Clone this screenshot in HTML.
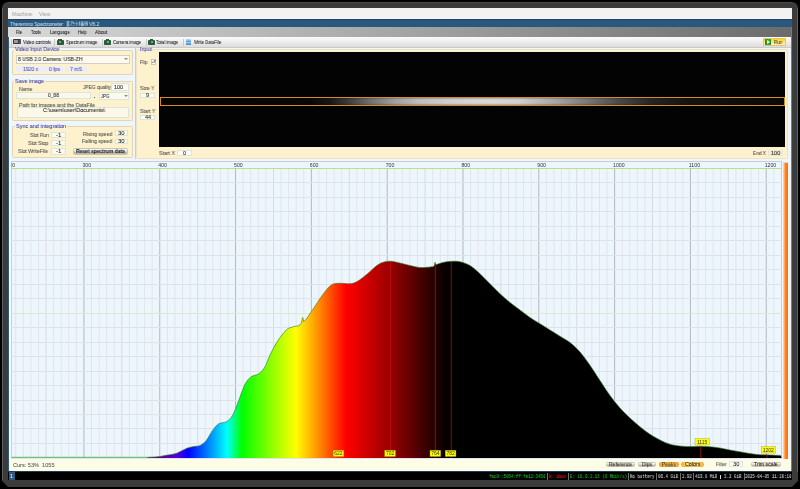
<!DOCTYPE html>
<html><head><meta charset="utf-8">
<style>
*{margin:0;padding:0;box-sizing:border-box}
html,body{width:800px;height:489px;overflow:hidden;background:#000}
body{position:relative;font-family:"Liberation Sans",sans-serif;font-size:5.5px;color:#1a1a1a}
.a{position:absolute}
.t{position:absolute;white-space:nowrap;line-height:1;transform-origin:0 50%;-webkit-text-stroke:0.06px currentColor;will-change:transform}
.m{font-family:"Liberation Mono",monospace}
.frame{left:2px;top:2px;width:796px;height:485px;background:#3b3b3b;border-radius:6px 6px 0 0;
 clip-path:polygon(0 0,100% 0,100% calc(100% - 6px),calc(100% - 6px) 100%,6px 100%,0 calc(100% - 6px))}
.grp{position:absolute;background:#fdf2cd;border:0.8px solid #e2d5b4;border-radius:1.5px}
.fld{position:absolute;background:#fbf6e6;border:0.7px solid #d9e6dc}
.lb{color:#4a4a4a}
.gt{color:#3c3cb0;background:linear-gradient(rgba(253,242,205,0) 38%,#fdf2cd 38%);padding:0 1px}
.btn{position:absolute;border-radius:1.5px;background:linear-gradient(#f7f6f2,#eceae4 45%,#cfcbc0 55%,#b4b0a4);border:0.6px solid #c8c4ba}
.sep{position:absolute;width:0.6px;background:#ababab}
</style></head><body>
<div class="a frame"></div>
<div class="a" style="left:2px;top:8px;width:0.8px;height:472px;background:#5e5e5e"></div>
<div class="a" style="left:797.3px;top:8px;width:0.8px;height:472px;background:#5e5e5e"></div>
<div class="a" style="left:8px;top:2px;width:784px;height:0.8px;background:#4a4a4a"></div>
<!-- content -->
<div class="a" style="left:8px;top:7.8px;width:783.7px;height:463.5px;background:#eef5fb"></div>
<div class="a" style="left:8px;top:19px;width:1px;height:452px;background:#2b5a86"></div>
<div class="a" style="left:9px;top:47px;width:2px;height:412px;background:#f8fbfe"></div>
<!-- Machine / View bar -->
<div class="a" style="left:8px;top:7.8px;width:783.7px;height:11.2px;background:#f3f2f0"></div>
<div class="t" style="left:11.9px;top:13.75px;font-size:5.6px;color:#a9a9a9;transform:translateY(calc(-50% + 0.75px)) scaleX(0.964)">Machine</div>
<div class="t" style="left:39.4px;top:13.75px;font-size:5.6px;color:#a9a9a9;transform:translateY(calc(-50% + 0.75px)) scaleX(0.931)">View</div>
<!-- title bar -->
<div class="a" style="left:8px;top:19px;width:783.7px;height:8px;background:#28587e;border-top:0.7px solid #1d4466"></div>
<div class="t" style="left:9.6px;top:23.7px;font-size:5.6px;color:#cddcea;transform:translateY(calc(-50% + 0.75px)) scaleX(0.858)">Theremino Spectrometer</div>
<svg class="a" style="left:65.8px;top:21.2px" width="22" height="5.4" viewBox="0 0 22 5.4"><g stroke="#d2dfec" stroke-width="0.55" fill="none">
<path d="M0.4,0.6H3.6M0.6,1.8H3.4M0.4,3.0H3.6M2,0.6V5M0.3,4.9H3.7M1,4H3"/>
<path d="M4.7,1H7M5.9,0.3V3M5.2,3L4.8,4.2M7.8,0.8V3.2M7,2H8.6M5,4.9L5.3,4.3M6.2,4.8V4.3M7.2,4.8V4.3M8.2,4.9L8,4.3"/>
<path d="M10.9,0.3V5M9.9,2L9.3,3.5M12,2L12.6,3.5"/>
<path d="M13.6,0.4V5M13,1.6H14.4M14.9,1H17.6M16.2,0.3V5M15.1,2.2H17.4V4.8H15.1ZM15.1,3.5H17.4"/>
<path d="M19,0.4V5M18.3,1.8L19.6,1.2M18.4,3.2L19.6,2.6M20.2,1H21.8M21,0.3V2.4M20.2,2.5H21.8M21,2.5L20.1,5M21,2.5L21.9,5"/>
</g></svg>
<div class="t" style="left:88.75px;top:23.7px;font-size:5.6px;color:#cddcea;transform:translateY(calc(-50% + 0.75px)) scaleX(0.886)">V8.2</div>
<!-- menubar -->
<div class="a" style="left:8px;top:27px;width:783.7px;height:10px;background:linear-gradient(90deg,#d9d9d9,#a3a3a3 52%,#6b6b6b)"></div>
<div class="t" style="left:16px;top:32.25px;color:#222;transform:translateY(calc(-50% + 0.75px)) scaleX(0.687)">File</div>
<div class="t" style="left:31.25px;top:32.25px;color:#222;transform:translateY(calc(-50% + 0.75px)) scaleX(0.779)">Tools</div>
<div class="t" style="left:50px;top:32.25px;color:#222;transform:translateY(calc(-50% + 0.75px)) scaleX(0.807)">Language</div>
<div class="t" style="left:77.9px;top:32.25px;color:#222;transform:translateY(calc(-50% + 0.75px)) scaleX(0.760)">Help</div>
<div class="t" style="left:95px;top:32.25px;color:#222;transform:translateY(calc(-50% + 0.75px)) scaleX(0.852)">About</div>
<!-- toolbar -->
<div class="a" style="left:9px;top:37px;width:782px;height:10px;background:linear-gradient(#fbfbfb,#efefef 45%,#dcdcdc)"></div>
<div class="sep" style="left:11.2px;top:38.5px;height:7px;background:#c8c8c8"></div>
<div class="a" style="left:13.1px;top:39px;width:7.9px;height:5.4px;background:#3a3a3a;border-radius:0.8px"></div>
<div class="a" style="left:14.2px;top:40px;width:4.2px;height:3.4px;background:#9a9a9a"></div>
<div class="a" style="left:18.6px;top:40.2px;width:2.2px;height:3.6px;background:#555"></div>
<div class="t" style="left:23.1px;top:41.9px;transform:translateY(calc(-50% + 0.75px)) scaleX(0.803)">Video controls</div>
<div class="sep" style="left:54.4px;top:38.5px;height:7px;background:#c8c8c8"></div>
<div class="a" style="left:56.5px;top:39.8px;width:7.2px;height:5px;background:#2d5c3b;border-radius:0.8px"></div>
<div class="a" style="left:58.3px;top:39px;width:3.6px;height:1.4px;background:#2d5c3b"></div>
<div class="a" style="left:59.2px;top:41.4px;width:2px;height:2px;background:#8fb89a;border-radius:1px"></div>
<div class="t" style="left:65.6px;top:41.9px;transform:translateY(calc(-50% + 0.75px)) scaleX(0.782)">Spectrum image</div>
<div class="sep" style="left:101.9px;top:38.5px;height:7px;background:#c8c8c8"></div>
<div class="a" style="left:103.8px;top:39.8px;width:7.2px;height:5px;background:#2d5c3b;border-radius:0.8px"></div>
<div class="a" style="left:105.6px;top:39px;width:3.6px;height:1.4px;background:#2d5c3b"></div>
<div class="a" style="left:106.5px;top:41.4px;width:2px;height:2px;background:#8fb89a;border-radius:1px"></div>
<div class="t" style="left:112.5px;top:41.9px;transform:translateY(calc(-50% + 0.75px)) scaleX(0.779)">Camera image</div>
<div class="sep" style="left:145.6px;top:38.5px;height:7px;background:#c8c8c8"></div>
<div class="a" style="left:147.8px;top:39.8px;width:7.2px;height:5px;background:#2d5c3b;border-radius:0.8px"></div>
<div class="a" style="left:149.6px;top:39px;width:3.6px;height:1.4px;background:#2d5c3b"></div>
<div class="a" style="left:150.5px;top:41.4px;width:2px;height:2px;background:#8fb89a;border-radius:1px"></div>
<div class="t" style="left:156.25px;top:41.9px;transform:translateY(calc(-50% + 0.75px)) scaleX(0.789)">Total image</div>
<div class="sep" style="left:183px;top:38.5px;height:7px;background:#c8c8c8"></div>
<div class="a" style="left:185.8px;top:38.6px;width:5.4px;height:3.4px;background:linear-gradient(#bfe2f8,#4a9ad8);border-radius:0.6px"></div>
<div class="a" style="left:185.8px;top:42.2px;width:5.4px;height:3px;background:linear-gradient(#9fd0f0,#3a80c8);border-radius:0.6px"></div>
<div class="t" style="left:194px;top:41.9px;transform:translateY(calc(-50% + 0.75px)) scaleX(0.783)">Write DataFile</div>
<div class="a" style="left:791px;top:27px;width:1px;height:444px;background:#3a8ad8"></div>
<!-- Run button -->
<div class="a" style="left:762.8px;top:37.5px;width:23.7px;height:8.6px;background:linear-gradient(#ffd41a,#ffe45a 45%,#fff2b0 80%,#fff8d8);border:0.7px solid #f0c060;border-radius:0.8px"></div>
<div class="a" style="left:764.9px;top:39px;width:6.3px;height:6.2px;background:linear-gradient(90deg,#13902a,#2fb04a 60%,#178a2c);border-radius:0.5px"></div>
<div class="a" style="left:767.2px;top:39.9px;width:0;height:0;border-left:3.2px solid #f4fff4;border-top:2.2px solid transparent;border-bottom:2.2px solid transparent"></div>
<div class="t" style="left:773.5px;top:42px;color:#333;font-size:5.4px;transform:translateY(calc(-50% + 0.75px)) scaleX(0.829)">Run</div>
<div class="a" style="left:9px;top:47px;width:782px;height:0.8px;background:#c9c9c9"></div>

<!-- left panel groups -->
<div class="grp" style="left:11.5px;top:49.6px;width:121.3px;height:25.7px"></div>
<div class="t gt" style="left:14.25px;top:49.30px;transform:translateY(calc(-50% + 0.75px)) scaleX(0.968)">Video Input Device</div>
<div class="fld" style="left:16px;top:54.9px;width:113.5px;height:8.7px;background:#fdf9ef;border-color:#d3cfc4"></div>
<div class="t" style="left:17.75px;top:59.2px;color:#1a1a1a;transform:translateY(calc(-50% + 0.75px)) scaleX(0.926)">8 USB 2.0 Camera: USB-ZH</div>
<div class="a" style="left:123.6px;top:58.4px;width:0;height:0;border-top:2.2px solid #8a8a8a;border-left:2.3px solid transparent;border-right:2.3px solid transparent"></div>
<div class="fld" style="left:16px;top:66.3px;width:28.6px;height:5.6px;background:#eceef3;border:none"></div>
<div class="t" style="left:22.9px;top:69px;color:#4848b8;transform:translateY(calc(-50% + 0.75px)) scaleX(0.920)">1920 x</div>
<div class="fld" style="left:46px;top:66.3px;width:17.4px;height:5.6px;background:#eceef3;border:none"></div>
<div class="t" style="left:49px;top:69px;color:#4848b8;transform:translateY(calc(-50% + 0.75px)) scaleX(0.921)">0 fps</div>
<div class="fld" style="left:65px;top:66.3px;width:21.6px;height:5.6px;background:#eceef3;border:none"></div>
<div class="t" style="left:70px;top:69px;color:#4848b8;transform:translateY(calc(-50% + 0.75px)) scaleX(0.927)">7 mS</div>

<div class="grp" style="left:11.5px;top:81.25px;width:121.3px;height:40.1px"></div>
<div class="t gt" style="left:14.25px;top:80.95px;transform:translateY(calc(-50% + 0.75px)) scaleX(0.985)">Save image</div>
<div class="t lb" style="left:19px;top:89.4px;transform:translateY(calc(-50% + 0.75px)) scaleX(0.920)">Name</div>
<div class="t lb" style="left:82.9px;top:87.1px;transform:translateY(calc(-50% + 0.75px)) scaleX(0.881)">JPEG quality</div>
<div class="fld" style="left:111px;top:83.4px;width:17.6px;height:7.4px;background:#fdfbf3"></div>
<div class="t" style="left:114.3px;top:87.1px;color:#222;transform:translateY(calc(-50% + 0.75px)) scaleX(1.001)">100</div>
<div class="fld" style="left:16px;top:92px;width:75px;height:7.2px;background:#fbf7ea"></div>
<div class="t" style="left:48.1px;top:95.4px;color:#222;transform:translateY(calc(-50% + 0.75px)) scaleX(0.890)">0_88</div>
<div class="a" style="left:94px;top:97px;width:0.9px;height:0.9px;background:#555"></div>
<div class="fld" style="left:99.2px;top:92px;width:29.8px;height:7.6px;background:#fdf9ee"></div>
<div class="t" style="left:100.6px;top:95.6px;color:#222;transform:translateY(calc(-50% + 0.75px)) scaleX(0.766)">JPG</div>
<div class="a" style="left:123.6px;top:95.3px;width:0;height:0;border-top:2.2px solid #8a8a8a;border-left:2.3px solid transparent;border-right:2.3px solid transparent"></div>
<div class="t lb" style="left:18.9px;top:104.75px;transform:translateY(calc(-50% + 0.75px)) scaleX(0.946)">Path for images and the DataFile</div>
<div class="fld" style="left:17.3px;top:107.2px;width:112.1px;height:10.6px;background:#fdf8e8"></div>
<div class="t" style="left:43px;top:110.4px;color:#222;transform:translateY(calc(-50% + 0.75px)) scaleX(0.975)">C:\users\user\Documents\</div>

<div class="grp" style="left:12px;top:125.9px;width:120.7px;height:32.1px"></div>
<div class="t gt" style="left:14.6px;top:125.60px;transform:translateY(calc(-50% + 0.75px)) scaleX(0.995)">Sync and integration</div>
<div class="t lb" style="left:29.8px;top:134.8px;transform:translateY(calc(-50% + 0.75px)) scaleX(0.895)">Slot Run</div>
<div class="t lb" style="left:28.2px;top:143.3px;transform:translateY(calc(-50% + 0.75px)) scaleX(0.918)">Slot Stop</div>
<div class="t lb" style="left:18.1px;top:151.4px;transform:translateY(calc(-50% + 0.75px)) scaleX(0.923)">Slot WriteFile</div>
<div class="fld" style="left:51.4px;top:131.6px;width:14.3px;height:6.4px;background:#fdfaf0"></div>
<div class="t" style="left:55.8px;top:134.8px;color:#222;transform:translateY(calc(-50% + 0.75px)) scaleX(1.104)">-1</div>
<div class="fld" style="left:51.4px;top:140.2px;width:14.3px;height:6px;background:#fdfaf0"></div>
<div class="t" style="left:55.8px;top:143.2px;color:#222;transform:translateY(calc(-50% + 0.75px)) scaleX(1.104)">-1</div>
<div class="fld" style="left:51.4px;top:148.3px;width:14.3px;height:6.3px;background:#fdfaf0"></div>
<div class="t" style="left:55.8px;top:151.4px;color:#222;transform:translateY(calc(-50% + 0.75px)) scaleX(1.104)">-1</div>
<div class="t lb" style="left:82.8px;top:133.5px;transform:translateY(calc(-50% + 0.75px)) scaleX(0.918)">Rising speed</div>
<div class="t lb" style="left:82px;top:141.3px;transform:translateY(calc(-50% + 0.75px)) scaleX(0.917)">Falling speed</div>
<div class="fld" style="left:115.3px;top:130.4px;width:12.5px;height:6px;background:#fdfaf0"></div>
<div class="t" style="left:118px;top:133.4px;color:#222;transform:translateY(calc(-50% + 0.75px)) scaleX(1.078)">30</div>
<div class="fld" style="left:115.3px;top:138.5px;width:12.5px;height:5.7px;background:#fdfaf0"></div>
<div class="t" style="left:118px;top:141.35px;color:#222;transform:translateY(calc(-50% + 0.75px)) scaleX(1.078)">30</div>
<div class="btn" style="left:72.6px;top:148.3px;width:55.2px;height:6.5px"></div>
<div class="t" style="left:75.8px;top:151.4px;color:#1a1a1a;font-weight:bold;transform:translateY(calc(-50% + 0.75px)) scaleX(0.902)">Reset spectrum data</div>

<!-- Input group -->
<div class="a" style="left:135.4px;top:47.8px;width:0.7px;height:111px;background:#c9cdd2"></div>
<div class="grp" style="left:136.1px;top:49.1px;width:652.1px;height:110px;border-color:#ece2c4"></div>
<div class="t gt" style="left:138.5px;top:48.80px;transform:translateY(calc(-50% + 0.75px)) scaleX(0.964)">Input</div>
<div class="t lb" style="left:140px;top:61.9px;transform:translateY(calc(-50% + 0.75px)) scaleX(0.834)">Flip</div>
<div class="a" style="left:151.2px;top:59.4px;width:5.3px;height:5.3px;background:#fbf9f2;border:0.6px solid #c9c9c1"></div>
<div class="a" style="left:152.3px;top:61.6px;width:1.3px;height:0.7px;background:#666;transform:rotate(45deg)"></div>
<div class="a" style="left:153px;top:61.3px;width:2.6px;height:0.7px;background:#666;transform:rotate(-55deg)"></div>
<div class="t lb" style="left:140px;top:88.4px;transform:translateY(calc(-50% + 0.75px)) scaleX(0.899)">Size Y</div>
<div class="fld" style="left:140px;top:92.5px;width:15px;height:5.4px;background:#fdfbf3"></div>
<div class="t" style="left:146.2px;top:95.2px;color:#222;transform:translateY(calc(-50% + 0.75px)) scaleX(0.980)">9</div>
<div class="t lb" style="left:140px;top:111.1px;transform:translateY(calc(-50% + 0.75px)) scaleX(0.915)">Start Y</div>
<div class="fld" style="left:140px;top:114.7px;width:15px;height:5px;background:#fdfbf3"></div>
<div class="t" style="left:144.6px;top:117.2px;color:#222;transform:translateY(calc(-50% + 0.75px)) scaleX(0.980)">44</div>
<div class="a" style="left:159.4px;top:52.4px;width:625.7px;height:94.6px;background:#030303"></div>
<div class="a" style="left:160px;top:97.7px;width:625px;height:7.8px;background:linear-gradient(90deg,#050505 0%,#080808 24%,#181818 27.2%,#404040 30.4%,#707070 33.6%,#a0a0a0 37.6%,#c0c0c0 41.6%,#d0d0d0 46.4%,#d8d8d8 52.8%,#d0d0d0 57.6%,#b8b8b8 60.8%,#a0a0a0 64%,#747474 68.8%,#484848 73.6%,#262626 78.4%,#151515 84%,#0e0e0e 92%,#0a0a0a 100%)"></div>
<div class="a" style="left:160px;top:97.7px;width:625px;height:7.8px;background:linear-gradient(rgba(0,0,0,.25),rgba(0,0,0,0) 25%,rgba(0,0,0,0) 75%,rgba(0,0,0,.25))"></div>
<div class="a" style="left:159.6px;top:96.8px;width:625.8px;height:9.2px;border:0.9px solid #dc8c1c"></div>
<div class="t lb" style="left:159px;top:153.3px;transform:translateY(calc(-50% + 0.75px)) scaleX(0.952)">Start X</div>
<div class="fld" style="left:177px;top:150.3px;width:14.8px;height:5.7px;background:#fdfbf3"></div>
<div class="t" style="left:183px;top:153.3px;color:#222;transform:translateY(calc(-50% + 0.75px)) scaleX(0.980)">0</div>
<div class="t lb" style="left:752.9px;top:153.4px;transform:translateY(calc(-50% + 0.75px)) scaleX(0.868)">End X</div>
<div class="fld" style="left:768px;top:150.3px;width:14.5px;height:5.9px;background:#fde8c2;border-color:#e4e8dc"></div>
<div class="t" style="left:770.7px;top:153.3px;color:#222;transform:translateY(calc(-50% + 0.75px)) scaleX(1.012)">100</div>

<svg width="800" height="489" style="position:absolute;left:0;top:0">
<defs><linearGradient id="sp" gradientUnits="userSpaceOnUse" x1="140" y1="0" x2="460" y2="0">
<stop offset="0.0000" stop-color="#1a0030"/>
<stop offset="0.0312" stop-color="#3a0060"/>
<stop offset="0.0781" stop-color="#5a00a0"/>
<stop offset="0.1187" stop-color="#5000e0"/>
<stop offset="0.1500" stop-color="#0000ff"/>
<stop offset="0.2125" stop-color="#0080ff"/>
<stop offset="0.2719" stop-color="#00ffff"/>
<stop offset="0.3187" stop-color="#00ff00"/>
<stop offset="0.4062" stop-color="#88ff00"/>
<stop offset="0.4875" stop-color="#ffff00"/>
<stop offset="0.5563" stop-color="#ff9000"/>
<stop offset="0.6438" stop-color="#ff0000"/>
<stop offset="0.7812" stop-color="#9a0000"/>
<stop offset="0.8750" stop-color="#4a0000"/>
<stop offset="0.9250" stop-color="#1e0000"/>
<stop offset="0.9688" stop-color="#000000"/>
<stop offset="1.0000" stop-color="#000000"/>
</linearGradient></defs>
<rect x="11.5" y="161.5" width="770.0" height="296.4" fill="#eef6fd" stroke="#c9ced6" stroke-width="1"/>
<line x1="15.71" y1="168.5" x2="15.71" y2="457.9" stroke="#e1e5ea" stroke-width="1"/>
<line x1="23.29" y1="168.5" x2="23.29" y2="457.9" stroke="#e1e5ea" stroke-width="1"/>
<line x1="30.87" y1="168.5" x2="30.87" y2="457.9" stroke="#e1e5ea" stroke-width="1"/>
<line x1="38.45" y1="168.5" x2="38.45" y2="457.9" stroke="#e1e5ea" stroke-width="1"/>
<line x1="46.04" y1="168.5" x2="46.04" y2="457.9" stroke="#d6dae0" stroke-width="1"/>
<line x1="53.62" y1="168.5" x2="53.62" y2="457.9" stroke="#e1e5ea" stroke-width="1"/>
<line x1="61.20" y1="168.5" x2="61.20" y2="457.9" stroke="#e1e5ea" stroke-width="1"/>
<line x1="68.78" y1="168.5" x2="68.78" y2="457.9" stroke="#e1e5ea" stroke-width="1"/>
<line x1="76.36" y1="168.5" x2="76.36" y2="457.9" stroke="#e1e5ea" stroke-width="1"/>
<line x1="83.94" y1="168.5" x2="83.94" y2="457.9" stroke="#b4b8be" stroke-width="1"/>
<line x1="91.52" y1="168.5" x2="91.52" y2="457.9" stroke="#e1e5ea" stroke-width="1"/>
<line x1="99.10" y1="168.5" x2="99.10" y2="457.9" stroke="#e1e5ea" stroke-width="1"/>
<line x1="106.68" y1="168.5" x2="106.68" y2="457.9" stroke="#e1e5ea" stroke-width="1"/>
<line x1="114.26" y1="168.5" x2="114.26" y2="457.9" stroke="#e1e5ea" stroke-width="1"/>
<line x1="121.84" y1="168.5" x2="121.84" y2="457.9" stroke="#d6dae0" stroke-width="1"/>
<line x1="129.43" y1="168.5" x2="129.43" y2="457.9" stroke="#e1e5ea" stroke-width="1"/>
<line x1="137.01" y1="168.5" x2="137.01" y2="457.9" stroke="#e1e5ea" stroke-width="1"/>
<line x1="144.59" y1="168.5" x2="144.59" y2="457.9" stroke="#e1e5ea" stroke-width="1"/>
<line x1="152.17" y1="168.5" x2="152.17" y2="457.9" stroke="#e1e5ea" stroke-width="1"/>
<line x1="159.75" y1="168.5" x2="159.75" y2="457.9" stroke="#b4b8be" stroke-width="1"/>
<line x1="167.33" y1="168.5" x2="167.33" y2="457.9" stroke="#e1e5ea" stroke-width="1"/>
<line x1="174.91" y1="168.5" x2="174.91" y2="457.9" stroke="#e1e5ea" stroke-width="1"/>
<line x1="182.49" y1="168.5" x2="182.49" y2="457.9" stroke="#e1e5ea" stroke-width="1"/>
<line x1="190.07" y1="168.5" x2="190.07" y2="457.9" stroke="#e1e5ea" stroke-width="1"/>
<line x1="197.66" y1="168.5" x2="197.66" y2="457.9" stroke="#d6dae0" stroke-width="1"/>
<line x1="205.24" y1="168.5" x2="205.24" y2="457.9" stroke="#e1e5ea" stroke-width="1"/>
<line x1="212.82" y1="168.5" x2="212.82" y2="457.9" stroke="#e1e5ea" stroke-width="1"/>
<line x1="220.40" y1="168.5" x2="220.40" y2="457.9" stroke="#e1e5ea" stroke-width="1"/>
<line x1="227.98" y1="168.5" x2="227.98" y2="457.9" stroke="#e1e5ea" stroke-width="1"/>
<line x1="235.56" y1="168.5" x2="235.56" y2="457.9" stroke="#b4b8be" stroke-width="1"/>
<line x1="243.14" y1="168.5" x2="243.14" y2="457.9" stroke="#e1e5ea" stroke-width="1"/>
<line x1="250.72" y1="168.5" x2="250.72" y2="457.9" stroke="#e1e5ea" stroke-width="1"/>
<line x1="258.30" y1="168.5" x2="258.30" y2="457.9" stroke="#e1e5ea" stroke-width="1"/>
<line x1="265.88" y1="168.5" x2="265.88" y2="457.9" stroke="#e1e5ea" stroke-width="1"/>
<line x1="273.47" y1="168.5" x2="273.47" y2="457.9" stroke="#d6dae0" stroke-width="1"/>
<line x1="281.05" y1="168.5" x2="281.05" y2="457.9" stroke="#e1e5ea" stroke-width="1"/>
<line x1="288.63" y1="168.5" x2="288.63" y2="457.9" stroke="#e1e5ea" stroke-width="1"/>
<line x1="296.21" y1="168.5" x2="296.21" y2="457.9" stroke="#e1e5ea" stroke-width="1"/>
<line x1="303.79" y1="168.5" x2="303.79" y2="457.9" stroke="#e1e5ea" stroke-width="1"/>
<line x1="311.37" y1="168.5" x2="311.37" y2="457.9" stroke="#b4b8be" stroke-width="1"/>
<line x1="318.95" y1="168.5" x2="318.95" y2="457.9" stroke="#e1e5ea" stroke-width="1"/>
<line x1="326.53" y1="168.5" x2="326.53" y2="457.9" stroke="#e1e5ea" stroke-width="1"/>
<line x1="334.11" y1="168.5" x2="334.11" y2="457.9" stroke="#e1e5ea" stroke-width="1"/>
<line x1="341.69" y1="168.5" x2="341.69" y2="457.9" stroke="#e1e5ea" stroke-width="1"/>
<line x1="349.28" y1="168.5" x2="349.28" y2="457.9" stroke="#d6dae0" stroke-width="1"/>
<line x1="356.86" y1="168.5" x2="356.86" y2="457.9" stroke="#e1e5ea" stroke-width="1"/>
<line x1="364.44" y1="168.5" x2="364.44" y2="457.9" stroke="#e1e5ea" stroke-width="1"/>
<line x1="372.02" y1="168.5" x2="372.02" y2="457.9" stroke="#e1e5ea" stroke-width="1"/>
<line x1="379.60" y1="168.5" x2="379.60" y2="457.9" stroke="#e1e5ea" stroke-width="1"/>
<line x1="387.18" y1="168.5" x2="387.18" y2="457.9" stroke="#b4b8be" stroke-width="1"/>
<line x1="394.76" y1="168.5" x2="394.76" y2="457.9" stroke="#e1e5ea" stroke-width="1"/>
<line x1="402.34" y1="168.5" x2="402.34" y2="457.9" stroke="#e1e5ea" stroke-width="1"/>
<line x1="409.92" y1="168.5" x2="409.92" y2="457.9" stroke="#e1e5ea" stroke-width="1"/>
<line x1="417.50" y1="168.5" x2="417.50" y2="457.9" stroke="#e1e5ea" stroke-width="1"/>
<line x1="425.09" y1="168.5" x2="425.09" y2="457.9" stroke="#d6dae0" stroke-width="1"/>
<line x1="432.67" y1="168.5" x2="432.67" y2="457.9" stroke="#e1e5ea" stroke-width="1"/>
<line x1="440.25" y1="168.5" x2="440.25" y2="457.9" stroke="#e1e5ea" stroke-width="1"/>
<line x1="447.83" y1="168.5" x2="447.83" y2="457.9" stroke="#e1e5ea" stroke-width="1"/>
<line x1="455.41" y1="168.5" x2="455.41" y2="457.9" stroke="#e1e5ea" stroke-width="1"/>
<line x1="462.99" y1="168.5" x2="462.99" y2="457.9" stroke="#b4b8be" stroke-width="1"/>
<line x1="470.57" y1="168.5" x2="470.57" y2="457.9" stroke="#e1e5ea" stroke-width="1"/>
<line x1="478.15" y1="168.5" x2="478.15" y2="457.9" stroke="#e1e5ea" stroke-width="1"/>
<line x1="485.73" y1="168.5" x2="485.73" y2="457.9" stroke="#e1e5ea" stroke-width="1"/>
<line x1="493.31" y1="168.5" x2="493.31" y2="457.9" stroke="#e1e5ea" stroke-width="1"/>
<line x1="500.89" y1="168.5" x2="500.89" y2="457.9" stroke="#d6dae0" stroke-width="1"/>
<line x1="508.48" y1="168.5" x2="508.48" y2="457.9" stroke="#e1e5ea" stroke-width="1"/>
<line x1="516.06" y1="168.5" x2="516.06" y2="457.9" stroke="#e1e5ea" stroke-width="1"/>
<line x1="523.64" y1="168.5" x2="523.64" y2="457.9" stroke="#e1e5ea" stroke-width="1"/>
<line x1="531.22" y1="168.5" x2="531.22" y2="457.9" stroke="#e1e5ea" stroke-width="1"/>
<line x1="538.80" y1="168.5" x2="538.80" y2="457.9" stroke="#b4b8be" stroke-width="1"/>
<line x1="546.38" y1="168.5" x2="546.38" y2="457.9" stroke="#e1e5ea" stroke-width="1"/>
<line x1="553.96" y1="168.5" x2="553.96" y2="457.9" stroke="#e1e5ea" stroke-width="1"/>
<line x1="561.54" y1="168.5" x2="561.54" y2="457.9" stroke="#e1e5ea" stroke-width="1"/>
<line x1="569.12" y1="168.5" x2="569.12" y2="457.9" stroke="#e1e5ea" stroke-width="1"/>
<line x1="576.71" y1="168.5" x2="576.71" y2="457.9" stroke="#d6dae0" stroke-width="1"/>
<line x1="584.29" y1="168.5" x2="584.29" y2="457.9" stroke="#e1e5ea" stroke-width="1"/>
<line x1="591.87" y1="168.5" x2="591.87" y2="457.9" stroke="#e1e5ea" stroke-width="1"/>
<line x1="599.45" y1="168.5" x2="599.45" y2="457.9" stroke="#e1e5ea" stroke-width="1"/>
<line x1="607.03" y1="168.5" x2="607.03" y2="457.9" stroke="#e1e5ea" stroke-width="1"/>
<line x1="614.61" y1="168.5" x2="614.61" y2="457.9" stroke="#b4b8be" stroke-width="1"/>
<line x1="622.19" y1="168.5" x2="622.19" y2="457.9" stroke="#e1e5ea" stroke-width="1"/>
<line x1="629.77" y1="168.5" x2="629.77" y2="457.9" stroke="#e1e5ea" stroke-width="1"/>
<line x1="637.35" y1="168.5" x2="637.35" y2="457.9" stroke="#e1e5ea" stroke-width="1"/>
<line x1="644.93" y1="168.5" x2="644.93" y2="457.9" stroke="#e1e5ea" stroke-width="1"/>
<line x1="652.51" y1="168.5" x2="652.51" y2="457.9" stroke="#d6dae0" stroke-width="1"/>
<line x1="660.10" y1="168.5" x2="660.10" y2="457.9" stroke="#e1e5ea" stroke-width="1"/>
<line x1="667.68" y1="168.5" x2="667.68" y2="457.9" stroke="#e1e5ea" stroke-width="1"/>
<line x1="675.26" y1="168.5" x2="675.26" y2="457.9" stroke="#e1e5ea" stroke-width="1"/>
<line x1="682.84" y1="168.5" x2="682.84" y2="457.9" stroke="#e1e5ea" stroke-width="1"/>
<line x1="690.42" y1="168.5" x2="690.42" y2="457.9" stroke="#b4b8be" stroke-width="1"/>
<line x1="698.00" y1="168.5" x2="698.00" y2="457.9" stroke="#e1e5ea" stroke-width="1"/>
<line x1="705.58" y1="168.5" x2="705.58" y2="457.9" stroke="#e1e5ea" stroke-width="1"/>
<line x1="713.16" y1="168.5" x2="713.16" y2="457.9" stroke="#e1e5ea" stroke-width="1"/>
<line x1="720.74" y1="168.5" x2="720.74" y2="457.9" stroke="#e1e5ea" stroke-width="1"/>
<line x1="728.33" y1="168.5" x2="728.33" y2="457.9" stroke="#d6dae0" stroke-width="1"/>
<line x1="735.91" y1="168.5" x2="735.91" y2="457.9" stroke="#e1e5ea" stroke-width="1"/>
<line x1="743.49" y1="168.5" x2="743.49" y2="457.9" stroke="#e1e5ea" stroke-width="1"/>
<line x1="751.07" y1="168.5" x2="751.07" y2="457.9" stroke="#e1e5ea" stroke-width="1"/>
<line x1="758.65" y1="168.5" x2="758.65" y2="457.9" stroke="#e1e5ea" stroke-width="1"/>
<line x1="766.23" y1="168.5" x2="766.23" y2="457.9" stroke="#b4b8be" stroke-width="1"/>
<line x1="773.81" y1="168.5" x2="773.81" y2="457.9" stroke="#e1e5ea" stroke-width="1"/>
<line x1="11.5" y1="182.50" x2="781.5" y2="182.50" stroke="#dfe3e8" stroke-width="1"/>
<line x1="11.5" y1="197.50" x2="781.5" y2="197.50" stroke="#dfe3e8" stroke-width="1"/>
<line x1="11.5" y1="211.50" x2="781.5" y2="211.50" stroke="#dfe3e8" stroke-width="1"/>
<line x1="11.5" y1="226.50" x2="781.5" y2="226.50" stroke="#dfe3e8" stroke-width="1"/>
<line x1="11.5" y1="240.50" x2="781.5" y2="240.50" stroke="#dfe3e8" stroke-width="1"/>
<line x1="11.5" y1="255.50" x2="781.5" y2="255.50" stroke="#dfe3e8" stroke-width="1"/>
<line x1="11.5" y1="269.50" x2="781.5" y2="269.50" stroke="#dfe3e8" stroke-width="1"/>
<line x1="11.5" y1="284.50" x2="781.5" y2="284.50" stroke="#dfe3e8" stroke-width="1"/>
<line x1="11.5" y1="298.50" x2="781.5" y2="298.50" stroke="#dfe3e8" stroke-width="1"/>
<line x1="11.5" y1="313.50" x2="781.5" y2="313.50" stroke="#d8eac6" stroke-width="1"/>
<line x1="11.5" y1="327.50" x2="781.5" y2="327.50" stroke="#dfe3e8" stroke-width="1"/>
<line x1="11.5" y1="342.50" x2="781.5" y2="342.50" stroke="#dfe3e8" stroke-width="1"/>
<line x1="11.5" y1="356.50" x2="781.5" y2="356.50" stroke="#dfe3e8" stroke-width="1"/>
<line x1="11.5" y1="371.50" x2="781.5" y2="371.50" stroke="#dfe3e8" stroke-width="1"/>
<line x1="11.5" y1="385.50" x2="781.5" y2="385.50" stroke="#dfe3e8" stroke-width="1"/>
<line x1="11.5" y1="400.50" x2="781.5" y2="400.50" stroke="#dfe3e8" stroke-width="1"/>
<line x1="11.5" y1="414.50" x2="781.5" y2="414.50" stroke="#dfe3e8" stroke-width="1"/>
<line x1="11.5" y1="428.50" x2="781.5" y2="428.50" stroke="#dfe3e8" stroke-width="1"/>
<line x1="11.5" y1="443.50" x2="781.5" y2="443.50" stroke="#dfe3e8" stroke-width="1"/>
<line x1="11.5" y1="168.5" x2="781.5" y2="168.5" stroke="#b9df8a" stroke-width="1"/>
<clipPath id="chc"><rect x="11.5" y="161.5" width="770.0" height="296.4"/></clipPath>
<text x="6.58" y="167" font-size="5.2" fill="#333" font-family="Liberation Sans" clip-path="url(#chc)">200</text>
<text x="82.39" y="167" font-size="5.2" fill="#333" font-family="Liberation Sans">300</text>
<text x="158.20" y="167" font-size="5.2" fill="#333" font-family="Liberation Sans">400</text>
<text x="234.01" y="167" font-size="5.2" fill="#333" font-family="Liberation Sans">500</text>
<text x="309.82" y="167" font-size="5.2" fill="#333" font-family="Liberation Sans">600</text>
<text x="385.63" y="167" font-size="5.2" fill="#333" font-family="Liberation Sans">700</text>
<text x="461.44" y="167" font-size="5.2" fill="#333" font-family="Liberation Sans">800</text>
<text x="537.25" y="167" font-size="5.2" fill="#333" font-family="Liberation Sans">900</text>
<text x="613.06" y="167" font-size="5.2" fill="#333" font-family="Liberation Sans">1000</text>
<text x="688.87" y="167" font-size="5.2" fill="#333" font-family="Liberation Sans">1100</text>
<text x="764.68" y="167" font-size="5.2" fill="#333" font-family="Liberation Sans">1200</text>
<clipPath id="spc"><path d="M147.5,457.9 L147.50,457.50 C149.25,457.38 155.08,457.13 158.00,456.80 C160.92,456.47 162.17,456.01 165.00,455.50 C167.83,454.99 172.29,454.50 175.00,453.75 C177.71,453.00 179.17,451.96 181.25,451.00 C183.33,450.04 185.42,448.75 187.50,448.00 C189.58,447.25 191.67,446.92 193.75,446.50 C195.83,446.08 197.92,446.50 200.00,445.50 C202.08,444.50 204.17,443.00 206.25,440.50 C208.33,438.00 210.42,433.29 212.50,430.50 C214.58,427.71 216.46,425.21 218.75,423.75 C221.04,422.29 223.96,423.12 226.25,421.75 C228.54,420.38 230.42,419.04 232.50,415.50 C234.58,411.96 236.67,405.71 238.75,400.50 C240.83,395.29 242.92,388.21 245.00,384.25 C247.08,380.29 248.96,378.50 251.25,376.75 C253.54,375.00 256.46,375.42 258.75,373.75 C261.04,372.08 263.12,369.88 265.00,366.75 C266.88,363.62 267.92,359.25 270.00,355.00 C272.08,350.75 274.79,345.42 277.50,341.25 C280.21,337.08 283.75,332.38 286.25,330.00 C288.75,327.62 290.21,327.83 292.50,327.00 C294.79,326.17 298.42,326.17 300.00,325.00 C301.58,323.83 301.58,321.25 302.00,320.00 C302.42,318.75 302.25,317.50 302.50,317.50 C302.75,317.50 303.17,319.38 303.50,320.00 C303.83,320.62 303.00,322.92 304.50,321.25 C306.00,319.58 309.50,314.38 312.50,310.00 C315.50,305.62 319.38,299.17 322.50,295.00 C325.62,290.83 328.33,286.96 331.25,285.00 C334.17,283.04 336.88,283.46 340.00,283.25 C343.12,283.04 347.08,284.08 350.00,283.75 C352.92,283.42 354.58,282.92 357.50,281.25 C360.42,279.58 364.17,276.46 367.50,273.75 C370.83,271.04 374.58,267.00 377.50,265.00 C380.42,263.00 382.71,262.38 385.00,261.75 C387.29,261.12 388.75,261.04 391.25,261.25 C393.75,261.46 396.88,262.29 400.00,263.00 C403.12,263.71 406.67,264.75 410.00,265.50 C413.33,266.25 416.67,267.25 420.00,267.50 C423.33,267.75 427.67,267.25 430.00,267.00 C432.33,266.75 433.17,266.75 434.00,266.00 C434.83,265.25 434.67,262.75 435.00,262.50 C435.33,262.25 435.38,264.29 436.00,264.50 C436.62,264.71 437.25,264.17 438.75,263.75 C440.25,263.33 442.71,262.42 445.00,262.00 C447.29,261.58 450.00,261.29 452.50,261.25 C455.00,261.21 457.08,261.04 460.00,261.75 C462.92,262.46 466.67,263.50 470.00,265.50 C473.33,267.50 476.67,270.71 480.00,273.75 C483.33,276.79 486.67,280.42 490.00,283.75 C493.33,287.08 496.67,290.62 500.00,293.75 C503.33,296.88 506.67,299.79 510.00,302.50 C513.33,305.21 516.67,307.50 520.00,310.00 C523.33,312.50 526.67,315.21 530.00,317.50 C533.33,319.79 536.67,321.67 540.00,323.75 C543.33,325.83 546.67,327.92 550.00,330.00 C553.33,332.08 556.67,334.17 560.00,336.25 C563.33,338.33 566.67,339.88 570.00,342.50 C573.33,345.12 576.67,348.21 580.00,352.00 C583.33,355.79 586.67,360.50 590.00,365.25 C593.33,370.00 596.67,375.46 600.00,380.50 C603.33,385.54 606.67,390.92 610.00,395.50 C613.33,400.08 616.67,404.25 620.00,408.00 C623.33,411.75 626.67,414.88 630.00,418.00 C633.33,421.12 636.67,424.04 640.00,426.75 C643.33,429.46 646.67,432.04 650.00,434.25 C653.33,436.46 656.67,438.33 660.00,440.00 C663.33,441.67 666.67,443.25 670.00,444.25 C673.33,445.25 676.67,445.62 680.00,446.00 C683.33,446.38 686.67,446.46 690.00,446.50 C693.33,446.54 696.67,446.21 700.00,446.25 C703.33,446.29 706.67,446.46 710.00,446.75 C713.33,447.04 716.67,447.46 720.00,448.00 C723.33,448.54 726.67,449.38 730.00,450.00 C733.33,450.62 736.67,451.17 740.00,451.75 C743.33,452.33 746.67,453.00 750.00,453.50 C753.33,454.00 756.67,454.50 760.00,454.75 C763.33,455.00 766.50,454.88 770.00,455.00 C773.50,455.12 779.17,455.42 781.00,455.50 L781.5,457.9 Z"/></clipPath>
<line x1="11.5" y1="457.29999999999995" x2="781.5" y2="457.29999999999995" stroke="#5cb85c" stroke-width="1"/>
<path d="M147.5,457.9 L147.50,457.50 C149.25,457.38 155.08,457.13 158.00,456.80 C160.92,456.47 162.17,456.01 165.00,455.50 C167.83,454.99 172.29,454.50 175.00,453.75 C177.71,453.00 179.17,451.96 181.25,451.00 C183.33,450.04 185.42,448.75 187.50,448.00 C189.58,447.25 191.67,446.92 193.75,446.50 C195.83,446.08 197.92,446.50 200.00,445.50 C202.08,444.50 204.17,443.00 206.25,440.50 C208.33,438.00 210.42,433.29 212.50,430.50 C214.58,427.71 216.46,425.21 218.75,423.75 C221.04,422.29 223.96,423.12 226.25,421.75 C228.54,420.38 230.42,419.04 232.50,415.50 C234.58,411.96 236.67,405.71 238.75,400.50 C240.83,395.29 242.92,388.21 245.00,384.25 C247.08,380.29 248.96,378.50 251.25,376.75 C253.54,375.00 256.46,375.42 258.75,373.75 C261.04,372.08 263.12,369.88 265.00,366.75 C266.88,363.62 267.92,359.25 270.00,355.00 C272.08,350.75 274.79,345.42 277.50,341.25 C280.21,337.08 283.75,332.38 286.25,330.00 C288.75,327.62 290.21,327.83 292.50,327.00 C294.79,326.17 298.42,326.17 300.00,325.00 C301.58,323.83 301.58,321.25 302.00,320.00 C302.42,318.75 302.25,317.50 302.50,317.50 C302.75,317.50 303.17,319.38 303.50,320.00 C303.83,320.62 303.00,322.92 304.50,321.25 C306.00,319.58 309.50,314.38 312.50,310.00 C315.50,305.62 319.38,299.17 322.50,295.00 C325.62,290.83 328.33,286.96 331.25,285.00 C334.17,283.04 336.88,283.46 340.00,283.25 C343.12,283.04 347.08,284.08 350.00,283.75 C352.92,283.42 354.58,282.92 357.50,281.25 C360.42,279.58 364.17,276.46 367.50,273.75 C370.83,271.04 374.58,267.00 377.50,265.00 C380.42,263.00 382.71,262.38 385.00,261.75 C387.29,261.12 388.75,261.04 391.25,261.25 C393.75,261.46 396.88,262.29 400.00,263.00 C403.12,263.71 406.67,264.75 410.00,265.50 C413.33,266.25 416.67,267.25 420.00,267.50 C423.33,267.75 427.67,267.25 430.00,267.00 C432.33,266.75 433.17,266.75 434.00,266.00 C434.83,265.25 434.67,262.75 435.00,262.50 C435.33,262.25 435.38,264.29 436.00,264.50 C436.62,264.71 437.25,264.17 438.75,263.75 C440.25,263.33 442.71,262.42 445.00,262.00 C447.29,261.58 450.00,261.29 452.50,261.25 C455.00,261.21 457.08,261.04 460.00,261.75 C462.92,262.46 466.67,263.50 470.00,265.50 C473.33,267.50 476.67,270.71 480.00,273.75 C483.33,276.79 486.67,280.42 490.00,283.75 C493.33,287.08 496.67,290.62 500.00,293.75 C503.33,296.88 506.67,299.79 510.00,302.50 C513.33,305.21 516.67,307.50 520.00,310.00 C523.33,312.50 526.67,315.21 530.00,317.50 C533.33,319.79 536.67,321.67 540.00,323.75 C543.33,325.83 546.67,327.92 550.00,330.00 C553.33,332.08 556.67,334.17 560.00,336.25 C563.33,338.33 566.67,339.88 570.00,342.50 C573.33,345.12 576.67,348.21 580.00,352.00 C583.33,355.79 586.67,360.50 590.00,365.25 C593.33,370.00 596.67,375.46 600.00,380.50 C603.33,385.54 606.67,390.92 610.00,395.50 C613.33,400.08 616.67,404.25 620.00,408.00 C623.33,411.75 626.67,414.88 630.00,418.00 C633.33,421.12 636.67,424.04 640.00,426.75 C643.33,429.46 646.67,432.04 650.00,434.25 C653.33,436.46 656.67,438.33 660.00,440.00 C663.33,441.67 666.67,443.25 670.00,444.25 C673.33,445.25 676.67,445.62 680.00,446.00 C683.33,446.38 686.67,446.46 690.00,446.50 C693.33,446.54 696.67,446.21 700.00,446.25 C703.33,446.29 706.67,446.46 710.00,446.75 C713.33,447.04 716.67,447.46 720.00,448.00 C723.33,448.54 726.67,449.38 730.00,450.00 C733.33,450.62 736.67,451.17 740.00,451.75 C743.33,452.33 746.67,453.00 750.00,453.50 C753.33,454.00 756.67,454.50 760.00,454.75 C763.33,455.00 766.50,454.88 770.00,455.00 C773.50,455.12 779.17,455.42 781.00,455.50 L781.5,457.9 Z" fill="url(#sp)"/>
<path d="M147.50,457.50 C149.25,457.38 155.08,457.13 158.00,456.80 C160.92,456.47 162.17,456.01 165.00,455.50 C167.83,454.99 172.29,454.50 175.00,453.75 C177.71,453.00 179.17,451.96 181.25,451.00 C183.33,450.04 185.42,448.75 187.50,448.00 C189.58,447.25 191.67,446.92 193.75,446.50 C195.83,446.08 197.92,446.50 200.00,445.50 C202.08,444.50 204.17,443.00 206.25,440.50 C208.33,438.00 210.42,433.29 212.50,430.50 C214.58,427.71 216.46,425.21 218.75,423.75 C221.04,422.29 223.96,423.12 226.25,421.75 C228.54,420.38 230.42,419.04 232.50,415.50 C234.58,411.96 236.67,405.71 238.75,400.50 C240.83,395.29 242.92,388.21 245.00,384.25 C247.08,380.29 248.96,378.50 251.25,376.75 C253.54,375.00 256.46,375.42 258.75,373.75 C261.04,372.08 263.12,369.88 265.00,366.75 C266.88,363.62 267.92,359.25 270.00,355.00 C272.08,350.75 274.79,345.42 277.50,341.25 C280.21,337.08 283.75,332.38 286.25,330.00 C288.75,327.62 290.21,327.83 292.50,327.00 C294.79,326.17 298.42,326.17 300.00,325.00 C301.58,323.83 301.58,321.25 302.00,320.00 C302.42,318.75 302.25,317.50 302.50,317.50 C302.75,317.50 303.17,319.38 303.50,320.00 C303.83,320.62 303.00,322.92 304.50,321.25 C306.00,319.58 309.50,314.38 312.50,310.00 C315.50,305.62 319.38,299.17 322.50,295.00 C325.62,290.83 328.33,286.96 331.25,285.00 C334.17,283.04 336.88,283.46 340.00,283.25 C343.12,283.04 347.08,284.08 350.00,283.75 C352.92,283.42 354.58,282.92 357.50,281.25 C360.42,279.58 364.17,276.46 367.50,273.75 C370.83,271.04 374.58,267.00 377.50,265.00 C380.42,263.00 382.71,262.38 385.00,261.75 C387.29,261.12 388.75,261.04 391.25,261.25 C393.75,261.46 396.88,262.29 400.00,263.00 C403.12,263.71 406.67,264.75 410.00,265.50 C413.33,266.25 416.67,267.25 420.00,267.50 C423.33,267.75 427.67,267.25 430.00,267.00 C432.33,266.75 433.17,266.75 434.00,266.00 C434.83,265.25 434.67,262.75 435.00,262.50 C435.33,262.25 435.38,264.29 436.00,264.50 C436.62,264.71 437.25,264.17 438.75,263.75 C440.25,263.33 442.71,262.42 445.00,262.00 C447.29,261.58 450.00,261.29 452.50,261.25 C455.00,261.21 457.08,261.04 460.00,261.75 C462.92,262.46 466.67,263.50 470.00,265.50 C473.33,267.50 476.67,270.71 480.00,273.75 C483.33,276.79 486.67,280.42 490.00,283.75 C493.33,287.08 496.67,290.62 500.00,293.75 C503.33,296.88 506.67,299.79 510.00,302.50 C513.33,305.21 516.67,307.50 520.00,310.00 C523.33,312.50 526.67,315.21 530.00,317.50 C533.33,319.79 536.67,321.67 540.00,323.75 C543.33,325.83 546.67,327.92 550.00,330.00 C553.33,332.08 556.67,334.17 560.00,336.25 C563.33,338.33 566.67,339.88 570.00,342.50 C573.33,345.12 576.67,348.21 580.00,352.00 C583.33,355.79 586.67,360.50 590.00,365.25 C593.33,370.00 596.67,375.46 600.00,380.50 C603.33,385.54 606.67,390.92 610.00,395.50 C613.33,400.08 616.67,404.25 620.00,408.00 C623.33,411.75 626.67,414.88 630.00,418.00 C633.33,421.12 636.67,424.04 640.00,426.75 C643.33,429.46 646.67,432.04 650.00,434.25 C653.33,436.46 656.67,438.33 660.00,440.00 C663.33,441.67 666.67,443.25 670.00,444.25 C673.33,445.25 676.67,445.62 680.00,446.00 C683.33,446.38 686.67,446.46 690.00,446.50 C693.33,446.54 696.67,446.21 700.00,446.25 C703.33,446.29 706.67,446.46 710.00,446.75 C713.33,447.04 716.67,447.46 720.00,448.00 C723.33,448.54 726.67,449.38 730.00,450.00 C733.33,450.62 736.67,451.17 740.00,451.75 C743.33,452.33 746.67,453.00 750.00,453.50 C753.33,454.00 756.67,454.50 760.00,454.75 C763.33,455.00 766.50,454.88 770.00,455.00 C773.50,455.12 779.17,455.42 781.00,455.50" fill="none" stroke="#3a7a2a" stroke-width="0.75" opacity="0.85"/>
<line x1="390.3" y1="250" x2="390.3" y2="457.9" stroke="#d01818" stroke-width="0.8" opacity="0.85" clip-path="url(#spc)"/>
<line x1="435.3" y1="250" x2="435.3" y2="457.9" stroke="#d01818" stroke-width="0.8" opacity="0.85" clip-path="url(#spc)"/>
<line x1="451.25" y1="250" x2="451.25" y2="457.9" stroke="#d01818" stroke-width="0.8" opacity="0.85" clip-path="url(#spc)"/>
<rect x="333.1" y="450.3" width="10.7" height="6.2" fill="#ffff00" stroke="#a0a000" stroke-width="0.4"/>
<text x="338.45000000000005" y="455.3" font-size="5" text-anchor="middle" fill="#333" font-family="Liberation Sans">622</text>
<rect x="384.7" y="450.3" width="10.7" height="6.2" fill="#ffff00" stroke="#a0a000" stroke-width="0.4"/>
<text x="390.05" y="455.3" font-size="5" text-anchor="middle" fill="#333" font-family="Liberation Sans">702</text>
<rect x="430" y="450.3" width="10.7" height="6.2" fill="#ffff00" stroke="#a0a000" stroke-width="0.4"/>
<text x="435.35" y="455.3" font-size="5" text-anchor="middle" fill="#333" font-family="Liberation Sans">764</text>
<rect x="445.25" y="450.3" width="10.7" height="6.2" fill="#ffff00" stroke="#a0a000" stroke-width="0.4"/>
<text x="450.6" y="455.3" font-size="5" text-anchor="middle" fill="#333" font-family="Liberation Sans">782</text>
<line x1="700.75" y1="444.8" x2="700.75" y2="457.9" stroke="#b01010" stroke-width="0.8" clip-path="url(#spc)"/>
<rect x="695" y="438.8" width="14.2" height="6.2" fill="#ffff00" stroke="#a0a000" stroke-width="0.4"/>
<text x="702.1" y="443.8" font-size="5" text-anchor="middle" fill="#333" font-family="Liberation Sans">1115</text>
<line x1="767" y1="452.8" x2="767" y2="457.9" stroke="#b01010" stroke-width="0.8" clip-path="url(#spc)"/>
<rect x="761.25" y="446.8" width="14.2" height="6.2" fill="#ffff00" stroke="#a0a000" stroke-width="0.4"/>
<text x="768.35" y="451.8" font-size="5" text-anchor="middle" fill="#333" font-family="Liberation Sans">1202</text>
</svg>

<!-- orange level bar -->
<div class="a" style="left:783.3px;top:161.9px;width:4.8px;height:296.8px;background:#d8d8d8;border-radius:0.5px"></div>
<div class="a" style="left:784.2px;top:162.8px;width:3.7px;height:295.8px;background:linear-gradient(90deg,#ffb878,#ff8a30 35%,#ff7200 70%,#ff7a10)"></div>
<!-- status bar -->
<div class="a" style="left:9px;top:458.6px;width:782px;height:12.2px;background:#fdfce7"></div>
<div class="t lb" style="left:12.9px;top:464.8px;color:#555;transform:translateY(calc(-50% + 0.75px)) scaleX(1.013)">Curs: 53% &nbsp;1055</div>
<div class="btn" style="left:606px;top:462px;width:29px;height:5.2px"></div>
<div class="t" style="left:609px;top:464.4px;color:#222;font-size:5px;transform:translateY(calc(-50% + 0.75px)) scaleX(0.992)">Reference</div>
<div class="btn" style="left:638.1px;top:462px;width:17.5px;height:5.2px"></div>
<div class="t" style="left:641.9px;top:464.4px;color:#222;font-size:5px;transform:translateY(calc(-50% + 0.75px)) scaleX(0.998)">Dips</div>
<div class="btn" style="left:658.75px;top:462px;width:20px;height:5.2px;background:linear-gradient(90deg,#ff9a20,#ffd860 25%,#ffe070 75%,#ff9a20);border-color:#f09a30"></div>
<div class="t" style="left:661.9px;top:464.4px;color:#222;font-size:5px;transform:translateY(calc(-50% + 0.75px)) scaleX(0.985)">Peaks</div>
<div class="btn" style="left:681.25px;top:462px;width:22.3px;height:5.2px;background:linear-gradient(90deg,#ffb030,#ffe07a 25%,#ffe480 75%,#ffb030);border-color:#f0b040"></div>
<div class="t" style="left:685px;top:464.4px;color:#222;font-size:5px;transform:translateY(calc(-50% + 0.75px)) scaleX(1.072)">Colors</div>
<div class="t lb" style="left:715.6px;top:464.4px;font-size:5.2px;transform:translateY(calc(-50% + 0.75px)) scaleX(0.919)">Filter</div>
<div class="fld" style="left:729.4px;top:461px;width:13.4px;height:5.6px;background:#fdfdf7;border-color:#dfe6ea"></div>
<div class="t" style="left:733px;top:463.9px;color:#222;transform:translateY(calc(-50% + 0.75px)) scaleX(1.045)">30</div>
<div class="btn" style="left:750.9px;top:462px;width:30px;height:5.2px"></div>
<div class="t" style="left:754.4px;top:464.4px;color:#222;font-size:5px;transform:translateY(calc(-50% + 0.75px)) scaleX(1.036)">Trim scale</div>
<div class="a" style="left:8px;top:470.7px;width:783.7px;height:0.9px;background:#1d3b5a"></div>

<!-- taskbar -->
<div class="a" style="left:8px;top:471.5px;width:784px;height:8.8px;background:#000"></div>
<div class="a" style="left:8.5px;top:472.2px;width:6.3px;height:8px;background:#2d5a82"></div>
<div class="t" style="left:10px;top:476.3px;font-size:5.6px;color:#e0eaf3;transform:translateY(calc(-50% + 0.75px))">1</div>
<div class="t m" style="left:489px;top:476.5px;font-size:5.4px;color:#1fc21f;transform:translateY(calc(-50% + 0.75px)) scaleX(0.758)">fec0::5054:ff:fe12:3456</div>
<div class="sep" style="left:546.6px;top:472.8px;height:7px;background:#707070"></div>
<div class="t m" style="left:549px;top:476.5px;font-size:5.4px;color:#e01818;transform:translateY(calc(-50% + 0.75px)) scaleX(0.750)">W: down</div>
<div class="sep" style="left:567.6px;top:472.8px;height:7px;background:#707070"></div>
<div class="t m" style="left:569.5px;top:476.5px;font-size:5.4px;color:#1fc21f;transform:translateY(calc(-50% + 0.75px)) scaleX(0.766)">E: 10.0.2.15 (0 Mbit/s)</div>
<div class="sep" style="left:628px;top:472.8px;height:7px;background:#707070"></div>
<div class="t m" style="left:629.8px;top:476.5px;font-size:5.4px;color:#d8d8d8;transform:translateY(calc(-50% + 0.75px)) scaleX(0.757)">No battery</div>
<div class="sep" style="left:655.7px;top:472.8px;height:7px;background:#707070"></div>
<div class="t m" style="left:657.7px;top:476.5px;font-size:5.4px;color:#d8d8d8;transform:translateY(calc(-50% + 0.75px)) scaleX(0.776)">86.4 GiB</div>
<div class="sep" style="left:679.5px;top:472.8px;height:7px;background:#707070"></div>
<div class="t m" style="left:681.5px;top:476.5px;font-size:5.4px;color:#d8d8d8;transform:translateY(calc(-50% + 0.75px)) scaleX(0.757)">2.92</div>
<div class="sep" style="left:693.3px;top:472.8px;height:7px;background:#707070"></div>
<div class="t m" style="left:695px;top:476.5px;font-size:5.4px;color:#d8d8d8;transform:translateY(calc(-50% + 0.75px)) scaleX(0.762)">413.8 MiB</div>
<div class="a" style="left:720.3px;top:474.5px;width:0.6px;height:4px;background:#d8d8d8"></div>
<div class="t m" style="left:724.25px;top:476.5px;font-size:5.4px;color:#d8d8d8;transform:translateY(calc(-50% + 0.75px)) scaleX(0.764)">3.2 GiB</div>
<div class="sep" style="left:743.5px;top:472.8px;height:7px;background:#707070"></div>
<div class="t m" style="left:745.25px;top:476.5px;font-size:5.4px;color:#d8d8d8;transform:translateY(calc(-50% + 0.75px)) scaleX(0.756)">2025-04-05 11:28:10</div>
<!-- frame right cover -->
<div class="a" style="left:792px;top:471.5px;width:6px;height:9px;background:#3b3b3b"></div>
</body></html>
